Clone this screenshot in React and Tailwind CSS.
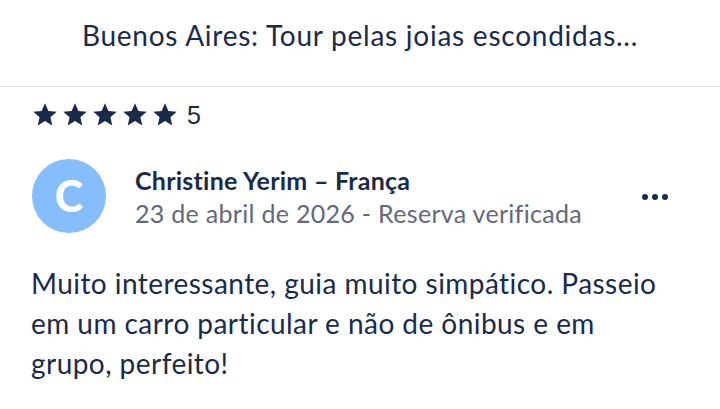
import React from 'react';

const Star = () => (
  <svg viewBox="0 0 24 24" className="w-[26px] h-[26px]" fill="#1a2b49">
    <path d="M12 1.2l3.15 7.05 7.65.7-5.8 5.1 1.72 7.55L12 17.65l-6.72 3.95L7 14.05l-5.8-5.1 7.65-.7z" />
  </svg>
);

export default function App() {
  return (
    <div className="w-[720px] h-[409px] bg-white overflow-hidden text-[#1a2b49]" style={{ fontFamily: 'Lato, "Open Sans", sans-serif' }}>
      {/* Header */}
      <div className="h-[87px] border-b border-[#e4e4e4] flex justify-center pt-[15px]">
        <h1 className="text-[28px] leading-[40px] font-normal tracking-[0.75px]">Buenos Aires: Tour pelas joias escondidas...</h1>
      </div>

      <div className="px-[32px]">
        {/* Rating */}
        <div className="flex items-center mt-[15px] h-[26px]">
          <div className="flex gap-[4px]">
            <Star />
            <Star />
            <Star />
            <Star />
            <Star />
          </div>
          <span className="ml-[9px] text-[25px] leading-none" style={{ fontFamily: '"Liberation Sans", Arial, sans-serif' }}>5</span>
        </div>

        {/* Reviewer */}
        <div className="flex items-center mt-[31px]">
          <div className="w-[74px] h-[74px] rounded-full bg-[#85bdfd] flex items-center justify-center shrink-0">
            <span className="text-white text-[43px] font-black leading-none pb-[2px]">C</span>
          </div>
          <div className="ml-[29px] flex-1">
            <div className="text-[25px] leading-[32px] font-bold tracking-[0.25px]">Christine Yerim – França</div>
            <div className="text-[25px] leading-[32px] text-[#63687a] tracking-[0.3px] mt-[1px]">23 de abril de 2026 - Reserva verificada</div>
          </div>
          <div className="flex gap-[4px] mr-[20px] mt-[2px]">
            <span className="w-[6px] h-[6px] rounded-full bg-[#1a2b49]" />
            <span className="w-[6px] h-[6px] rounded-full bg-[#1a2b49]" />
            <span className="w-[6px] h-[6px] rounded-full bg-[#1a2b49]" />
          </div>
        </div>

        {/* Body */}
        <p className="-ml-[1px] mt-[30px] text-[28px] leading-[40px] tracking-[0.45px] max-w-[650px]">
          Muito interessante, guia muito simpático. Passeio em um carro particular e não de ônibus e em grupo, perfeito!
        </p>
      </div>
    </div>
  );
}
